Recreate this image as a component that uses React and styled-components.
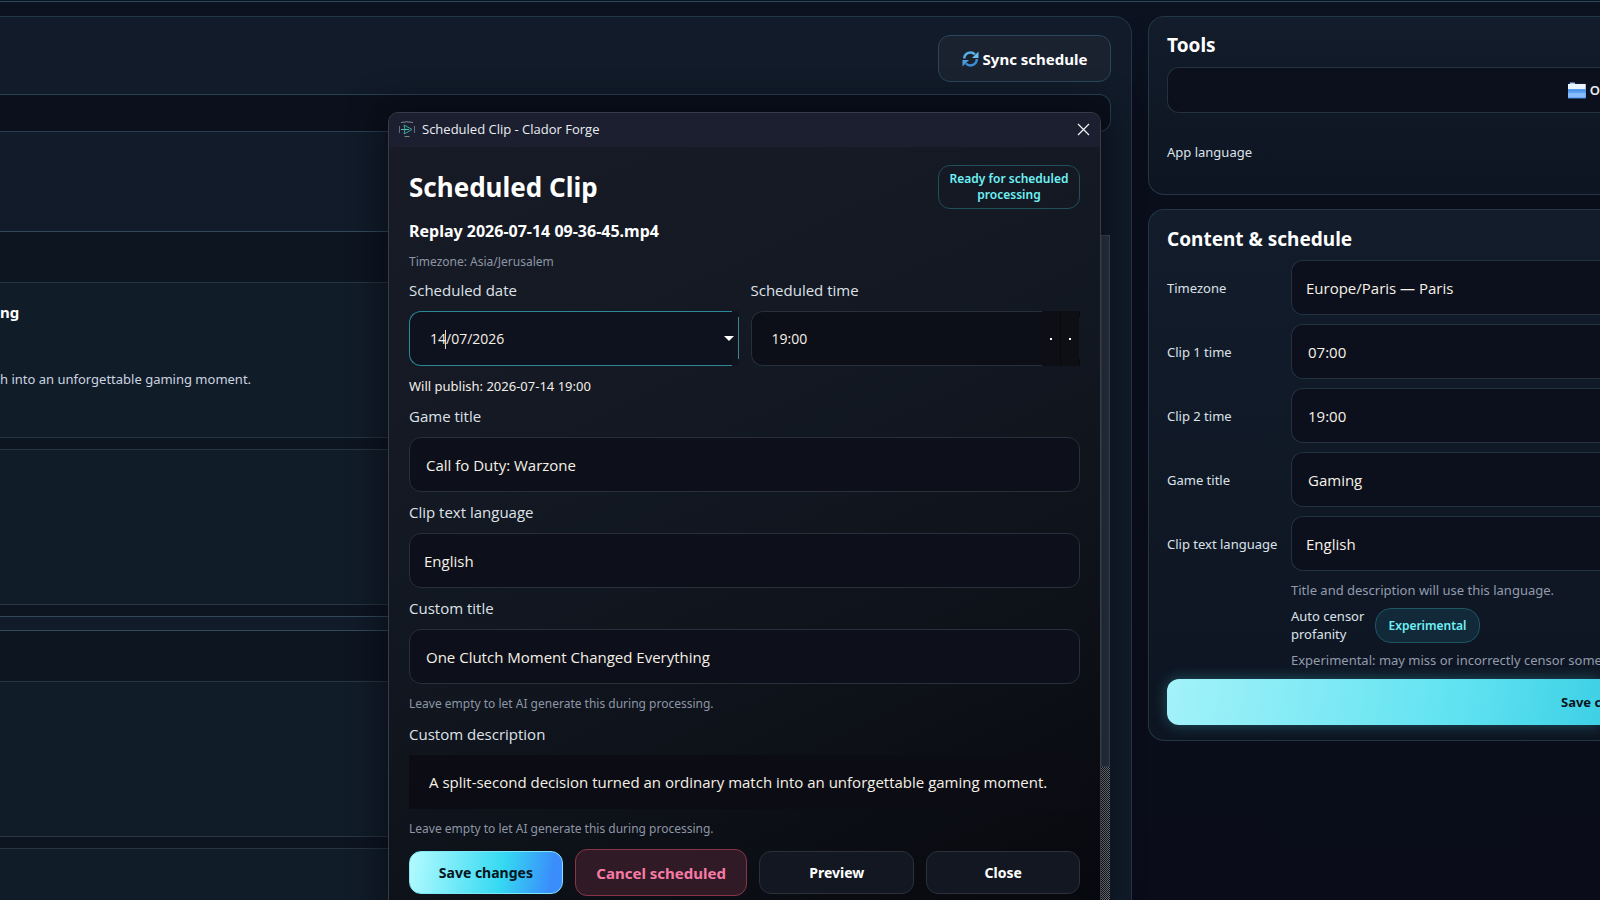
import React from "react";
import styled, { createGlobalStyle, css } from "styled-components";

const Global = createGlobalStyle`
  *, *::before, *::after { box-sizing: border-box; }
  html, body, #root { height: 100%; }
  body {
    margin: 0;
    overflow: hidden;
    background: #0a0d19;
    color: #e6e9f0;
    font-family: "Noto Sans", "Open Sans", sans-serif;
  }
  h1, h2, h3, p { margin: 0; }
  button, input, select, textarea { font-family: inherit; margin: 0; }
`;

const fieldFont = `"Open Sans", "Noto Sans", sans-serif`;

const Page = styled.div`
  position: relative;
  height: 100%;
  min-height: 100vh;
  overflow: hidden;
  display: flex;
  flex-direction: column;
  background: linear-gradient(180deg, #0b1220 0, #0a0e1b 120px, #0a0d19 100%);
`;

const TopRule = styled.header`
  flex: none;
  height: 2px;
  border-bottom: 1px solid #2b4a60;
`;

const Columns = styled.div`
  flex: 1;
  min-height: 0;
  display: flex;
  gap: 16px;
  padding-top: 14px;
`;

const panel = css`
  border: 1px solid #223645;
  background: linear-gradient(180deg, #121c2a, #0e1522);
`;

const MainPanel = styled.main`
  ${panel}
  flex: 1;
  min-width: 0;
  display: flex;
  flex-direction: column;
  border-width: 1px 1px 0 0;
  border-radius: 0 18px 0 0;
  padding: 18px 20px 0 0;
  background: #111b29;
`;

const Toolbar = styled.div`
  display: flex;
  justify-content: flex-end;
`;

const SyncButton = styled.button`
  display: flex;
  align-items: center;
  justify-content: center;
  gap: 4px;
  width: 173px;
  height: 47px;
  border: 1px solid #27485a;
  border-radius: 12px;
  background: #1a222f;
  color: #fff;
  font-size: 15px;
  font-weight: 700;
  padding: 0;
`;

const FilterStrip = styled.div`
  flex: none;
  height: 38px;
  margin-top: 12px;
  border: 1px solid #27404f;
  border-left: 0;
  border-radius: 0 12px 12px 0;
  background: #0c101c;
`;

const ScrollArea = styled.div`
  flex: 1;
  min-height: 0;
  display: flex;
  margin-top: 99px;
  overflow: hidden;
  padding-right: 1px;
`;

const DayList = styled.div`
  flex: 1;
  min-width: 0;
  display: flex;
  flex-direction: column;
  gap: 13px;
`;

const Day = styled.section`
  flex: none;
  border: solid #33495a;
  border-width: 1px 0;
  padding: 50px 0 11px;
  display: flex;
  flex-direction: column;
  gap: 11px;
  background: #0d1521;
`;

const ClipCard = styled.article`
  height: 156px;
  border: solid #253541;
  border-width: 1px 0;
  background: #111c29;
  padding: 18px 0;
  display: flex;
  flex-direction: column;
  gap: 46px;
`;

const ClipName = styled.h3`
  font-size: 15px;
  line-height: 22px;
  color: #fff;
`;

const ClipText = styled.p`
  font-size: 13px;
  line-height: 20px;
  color: #ccd4e0;
  white-space: nowrap;
`;

const Scrollbar = styled.div`
  flex: none;
  width: 9px;
  margin-top: 4px;
  display: flex;
  flex-direction: column;
`;

const Thumb = styled.div`
  height: 532px;
  border: 1px solid #3e4c5b;
  background: #2c3846;
`;

const Track = styled.div`
  flex: 1;
  background: repeating-conic-gradient(#85898c 0 25%, #16191f 0 50%) 0 0 / 2px 2px;
`;

const Side = styled.aside`
  flex: 0 0 452px;
  min-width: 0;
  display: flex;
  flex-direction: column;
  gap: 14px;
`;

const SidePanel = styled.section`
  ${panel}
  border-right: 0;
  border-radius: 16px 0 0 16px;
  padding: ${(p) => p.$pad} 0 15px 18px;
`;

const SideTitle = styled.h2`
  font-size: 19px;
  line-height: 24px;
  color: #fff;
`;

const FolderButton = styled.button`
  display: flex;
  align-items: center;
  gap: 4px;
  width: 100%;
  height: 46px;
  margin-top: 10px;
  padding: 0 0 0 400px;
  border: 1px solid #22323f;
  border-right: 0;
  border-radius: 12px 0 0 12px;
  background: #0c101c;
  color: #e6ecf5;
  font-size: 13px;
  font-weight: 600;
`;

const AppLanguage = styled.p`
  margin-top: 29px;
  padding-bottom: 17px;
  font-size: 13px;
  line-height: 20px;
  color: #dde2ea;
`;

const SettingsGrid = styled.form`
  display: grid;
  grid-template-columns: 115px minmax(0, 1fr);
  column-gap: 9px;
  row-gap: 9px;
  margin-top: 9px;
  align-items: center;
`;

const SideLabel = styled.label`
  font-size: 13px;
  line-height: 18px;
  color: #dde2ea;
  white-space: nowrap;
`;

const control = css`
  display: block;
  width: 100%;
  height: 55px;
  border: 1px solid #262f3a;
  border-radius: 12px;
  background: #0d101a;
  color: #f6f0e6;
  font-family: ${fieldFont};
  font-size: 15px;
  line-height: 22px;
  outline: none;
  appearance: none;
`;

const openRight = css`
  border-color: #22323f;
  border-right: 0;
  border-radius: 12px 0 0 12px;
  background: #0c101c;
`;

const Input = styled.input`
  ${control}
  padding: 0 16px;
  ${(p) => p.$open && openRight}
`;

const Select = styled.select`
  ${control}
  padding: 0 14px;
  ${(p) => p.$open && openRight}
`;

const SideNotes = styled.div`
  grid-column: 2;
  display: flex;
  flex-direction: column;
  gap: 7px;
`;

const SideHint = styled.p`
  font-size: 13px;
  line-height: 20px;
  color: #929cad;
  white-space: nowrap;
`;

const CensorRow = styled.div`
  display: flex;
  align-items: center;
  gap: 10px;
`;

const CensorLabel = styled.p`
  width: 74px;
  font-size: 13px;
  line-height: 18px;
  color: #dde2ea;
`;

const Tag = styled.span`
  width: 105px;
  height: 35px;
  border: 1px solid #1e5664;
  border-radius: 16px;
  background: #12293a;
  color: #6ff1f6;
  font-size: 12px;
  font-weight: 600;
  line-height: 34px;
  text-align: center;
`;

const SideSave = styled.button`
  grid-column: 1 / -1;
  height: 46px;
  border: 0;
  border-radius: 12px 0 0 12px;
  padding: 0 0 0 394px;
  background: linear-gradient(100deg, #a3f2f9, #5fe2f1 68%, #3ed0e6);
  box-shadow: 0 0 14px rgba(60, 200, 220, 0.35);
  color: #06141c;
  font-size: 13px;
  font-weight: 700;
  text-align: left;
  white-space: nowrap;
`;

const Dialog = styled.div`
  position: absolute;
  top: 112px;
  left: 388px;
  width: 713px;
  border: 1px solid #373c48;
  border-radius: 10px;
  overflow: hidden;
  background: linear-gradient(155deg, #181b26 0, #121822 45%, #0d1017 75%, #07080d 100%);
  box-shadow: 0 0 34px 4px rgba(4, 5, 12, 0.6);
`;

const TitleBar = styled.div`
  display: flex;
  align-items: center;
  height: 34px;
  padding: 0 10px 2px;
  gap: 7px;
  background: #1b1f2f;
`;

const WindowTitle = styled.span`
  flex: 1;
  font-family: ${fieldFont};
  font-size: 13px;
  line-height: 20px;
  color: #eceef3;
`;

const CloseIcon = styled.button`
  display: flex;
  padding: 0;
  border: 0;
  background: none;
  color: #f2f3f6;
`;

const Body = styled.form`
  display: flex;
  flex-direction: column;
  gap: 10px;
  padding: 18px 20px 20px;
`;

const Heading = styled.div`
  display: flex;
  justify-content: space-between;
  align-items: center;
  height: 44px;
`;

const Title = styled.h1`
  font-size: 26px;
  line-height: 36px;
  color: #fff;
`;

const Status = styled.p`
  width: 142px;
  height: 44px;
  padding: 5px 0;
  border: 1px solid #1f505c;
  border-radius: 12px;
  color: #6ff1f6;
  font-size: 12px;
  font-weight: 600;
  line-height: 16px;
  text-align: center;
`;

const FileName = styled.h2`
  font-size: 16px;
  line-height: 24px;
  color: #fff;
`;

const Note = styled.p`
  font-size: ${(p) => (p.$strong ? "13px" : "12px")};
  line-height: ${(p) => p.$lh || "20px"};
  color: ${(p) => (p.$strong ? "#f3efe8" : "#8d96a5")};
`;

const Pair = styled.div`
  display: grid;
  grid-template-columns: 1fr 1fr;
  gap: 12px;
`;

const Group = styled.div`
  display: flex;
  flex-direction: column;
  gap: 10px;
`;

const Label = styled.label`
  font-family: ${fieldFont};
  font-size: 15px;
  line-height: 21px;
  color: #dfe2e8;
`;

const Picker = styled.div`
  position: relative;
  display: flex;
  align-items: center;
  height: 55px;
  border: 1px solid ${(p) => (p.$focus ? "#2c8797" : "#262f3a")};
  border-right: 0;
  border-radius: 12px 0 0 12px;
  background: ${(p) => (p.$focus ? "#0e121e" : "#0d0f18")};

  &::after {
    content: "";
    position: absolute;
    top: 5px;
    bottom: 6px;
    right: 0;
    width: 1px;
    background: ${(p) => (p.$focus ? "#3a8594" : "#15171d")};
  }
`;

const PickerInput = styled.input`
  flex: 1;
  min-width: 0;
  border: 0;
  outline: 0;
  padding: 0 20px;
  background: none;
  color: #f6f0e6;
  font-family: ${fieldFont};
  font-size: 14px;
  line-height: 22px;
`;

const Caret = styled.span`
  position: absolute;
  left: 35px;
  top: 18px;
  width: 1px;
  height: 19px;
  background: #e8d9b8;
`;

const DropButton = styled.button`
  align-self: stretch;
  display: flex;
  align-items: center;
  width: 24px;
  margin: -1px 0;
  padding: 0 0 0 9px;
  border: 0;
  background: linear-gradient(90deg, transparent 17px, #10141e 17px);
`;

const Arrow = styled.i`
  border: 5px solid transparent;
  border-top-color: #fff;
  border-bottom: 0;
`;

const StepButton = styled.button`
  align-self: stretch;
  display: flex;
  align-items: center;
  justify-content: center;
  width: 19px;
  margin: -1px 0;
  padding: 0;
  border: 0;
  border-right: 1px solid #08090d;
  background: #0e0f15;

  &::before {
    content: "";
    width: 2px;
    height: 2px;
    background: #fff;
  }
`;

const Description = styled.textarea`
  display: block;
  width: 100%;
  height: 54px;
  padding: 16px 20px;
  border: 0;
  outline: 0;
  resize: none;
  overflow: hidden;
  background: #0c0d14;
  color: #f6f0e6;
  font-family: ${fieldFont};
  font-size: 15px;
  line-height: 22px;
`;

const Actions = styled.div`
  display: grid;
  grid-template-columns: 154fr 173fr 155fr 154fr;
  column-gap: 12px;
  align-items: center;
`;

const tones = {
  primary: css`
    border-color: #7fe6f7;
    background: linear-gradient(100deg, #b4fbff, #35d9f2 60%, #3a8dfb 92%);
    color: #06141c;
    font-size: 14px;
  `,
  danger: css`
    height: 47px;
    border-color: #8a3547;
    background: #2f1a25;
    color: #f87aa6;
    font-size: 15px;
  `,
  plain: css`
    border-color: #2a313c;
    background: #121722;
    color: #fff;
    font-size: 14px;
  `,
};

const Action = styled.button`
  height: 43px;
  padding: 0;
  border: 1px solid;
  border-radius: 12px;
  font-weight: 700;
  ${(p) => tones[p.$tone]}
`;

function SyncIcon() {
  return (
    <svg width="17" height="18" viewBox="0 0 17 18" fill="none" aria-hidden="true">
      <path d="M2.200 8.500A6.300 6.300 0 0 1 13 4.500" stroke="#58aee6" strokeWidth="2.400" />
      <path d="M14.800 9A6.300 6.300 0 0 1 4 13.500" stroke="#3b8fd6" strokeWidth="2.400" />
      <path d="M16.500 1.500v6.500h-6.500z" fill="#6cbcf0" />
      <path d="M.5 16.500V10h6.500z" fill="#4a9ce0" />
    </svg>
  );
}

function FolderIcon() {
  return (
    <svg width="19" height="17" viewBox="0 0 19 17" aria-hidden="true">
      <path d="M2 0h5l1 2H2z" fill="#9cc9fb" />
      <path d="M0 1.500h19V9H0z" fill="#e9f4ff" />
      <path d="M0 7h19v10H0z" fill="#4b92ea" />
      <path d="M0 9h19v2H0z" fill="#5a9ff0" />
      <path d="M0 11h19v5H0z" fill="#86bcfa" />
    </svg>
  );
}

function AppLogo() {
  return (
    <svg width="16" height="17" viewBox="0 0 16 17" fill="none" aria-hidden="true">
      <path d="M2 1.500Q8 0 14 1.500" stroke="#7d8793" />
      <path d="M.5 5v7M15.500 5v7" stroke="#66707c" />
      <path d="M5.500 15.500h5" stroke="#8a8278" />
      <path d="M5 4l8 4.500L5 13l1-4.500z" stroke="#3ea79d" />
      <path d="M2 8.500h8" stroke="#4fc0b4" />
    </svg>
  );
}

const settings = [
  { id: "tz", label: "Timezone", value: "Europe/Paris — Paris", select: true },
  { id: "clip1", label: "Clip 1 time", value: "07:00" },
  { id: "clip2", label: "Clip 2 time", value: "19:00" },
  { id: "game", label: "Game title", value: "Gaming" },
  { id: "lang", label: "Clip text language", value: "English", select: true },
];

function Schedule() {
  return (
    <MainPanel>
      <Toolbar>
        <SyncButton type="button">
          <SyncIcon />
          Sync schedule
        </SyncButton>
      </Toolbar>
      <FilterStrip />
      <ScrollArea>
        <DayList>
          <Day>
            <ClipCard>
              <ClipName>ng</ClipName>
              <ClipText>h into an unforgettable gaming moment.</ClipText>
            </ClipCard>
            <ClipCard />
          </Day>
          <Day>
            <ClipCard />
            <ClipCard />
          </Day>
        </DayList>
        <Scrollbar>
          <Thumb />
          <Track />
        </Scrollbar>
      </ScrollArea>
    </MainPanel>
  );
}

function Sidebar() {
  return (
    <Side>
      <SidePanel $pad="16px">
        <SideTitle>Tools</SideTitle>
        <FolderButton type="button">
          <FolderIcon />O
        </FolderButton>
        <AppLanguage>App language</AppLanguage>
      </SidePanel>
      <SidePanel $pad="17px">
        <SideTitle>Content &amp; schedule</SideTitle>
        <SettingsGrid>
          {settings.map((s) => (
            <React.Fragment key={s.id}>
              <SideLabel htmlFor={s.id}>{s.label}</SideLabel>
              {s.select ? (
                <Select id={s.id} $open>
                  <option>{s.value}</option>
                </Select>
              ) : (
                <Input id={s.id} defaultValue={s.value} $open />
              )}
            </React.Fragment>
          ))}
          <SideNotes>
            <SideHint>Title and description will use this language.</SideHint>
            <CensorRow>
              <CensorLabel>Auto censor profanity</CensorLabel>
              <Tag>Experimental</Tag>
            </CensorRow>
            <SideHint>Experimental: may miss or incorrectly censor some</SideHint>
          </SideNotes>
          <SideSave type="button">Save c</SideSave>
        </SettingsGrid>
      </SidePanel>
    </Side>
  );
}

function ClipDialog() {
  return (
    <Dialog role="dialog" aria-labelledby="clip-title">
      <TitleBar>
        <AppLogo />
        <WindowTitle>Scheduled Clip - Clador Forge</WindowTitle>
        <CloseIcon type="button" aria-label="Close window">
          <svg width="13" height="13" viewBox="0 0 13 13" stroke="currentColor" strokeWidth="1.2">
            <path d="M1 1l11 11M12 1L1 12" />
          </svg>
        </CloseIcon>
      </TitleBar>
      <Body>
        <Heading>
          <Title id="clip-title">Scheduled Clip</Title>
          <Status>
            Ready for scheduled
            <br />
            processing
          </Status>
        </Heading>
        <FileName>Replay 2026-07-14 09-36-45.mp4</FileName>
        <Note $lh="17px">Timezone: Asia/Jerusalem</Note>
        <Pair>
          <Group>
            <Label htmlFor="date">Scheduled date</Label>
            <Picker $focus>
              <PickerInput id="date" defaultValue="14/07/2026" />
              <Caret />
              <DropButton type="button" aria-label="Open calendar">
                <Arrow />
              </DropButton>
            </Picker>
          </Group>
          <Group>
            <Label htmlFor="time">Scheduled time</Label>
            <Picker>
              <PickerInput id="time" defaultValue="19:00" />
              <StepButton type="button" aria-label="Later" />
              <StepButton type="button" aria-label="Earlier" />
            </Picker>
          </Group>
        </Pair>
        <Note $strong>Will publish: 2026-07-14 19:00</Note>
        <Label htmlFor="clip-game">Game title</Label>
        <Input id="clip-game" defaultValue="Call fo Duty: Warzone" />
        <Label htmlFor="clip-lang">Clip text language</Label>
        <Select id="clip-lang">
          <option>English</option>
        </Select>
        <Label htmlFor="custom-title">Custom title</Label>
        <Input id="custom-title" defaultValue="One Clutch Moment Changed Everything" />
        <Note>Leave empty to let AI generate this during processing.</Note>
        <Label htmlFor="custom-desc">Custom description</Label>
        <Description
          id="custom-desc"
          defaultValue="A split-second decision turned an ordinary match into an unforgettable gaming moment."
        />
        <Note>Leave empty to let AI generate this during processing.</Note>
        <Actions>
          <Action type="button" $tone="primary">Save changes</Action>
          <Action type="button" $tone="danger">Cancel scheduled</Action>
          <Action type="button" $tone="plain">Preview</Action>
          <Action type="button" $tone="plain">Close</Action>
        </Actions>
      </Body>
    </Dialog>
  );
}

export default function App() {
  return (
    <>
      <Global />
      <Page>
        <TopRule />
        <Columns>
          <Schedule />
          <Sidebar />
        </Columns>
        <ClipDialog />
      </Page>
    </>
  );
}
